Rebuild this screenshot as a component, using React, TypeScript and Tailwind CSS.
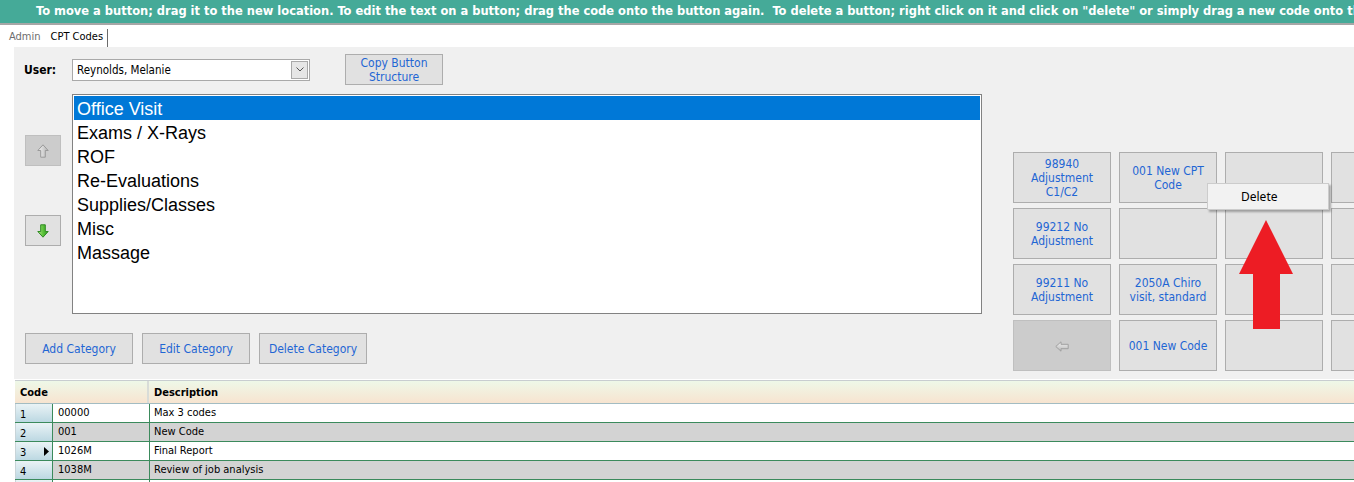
import React from 'react';

const tahoma = "font-['DejaVu_Sans_Condensed','DejaVu_Sans',sans-serif]";

const gridRows: string[][] = [
  ['98940\nAdjustment\nC1/C2', '001 New CPT\nCode', '', ''],
  ['99212 No\nAdjustment', '', '', ''],
  ['99211 No\nAdjustment', '2050A Chiro\nvisit, standard', '', ''],
  ['<', '001 New Code', '', ''],
];

const categories = ['Office Visit', 'Exams / X-Rays', 'ROF', 'Re-Evaluations', 'Supplies/Classes', 'Misc', 'Massage'];

const codes = [
  { n: '1', code: '00000', desc: 'Max 3 codes' },
  { n: '2', code: '001', desc: 'New Code' },
  { n: '3', code: '1026M', desc: 'Final Report', current: true },
  { n: '4', code: '1038M', desc: 'Review of job analysis' },
  { n: '', code: '', desc: '' },
];

function UpArrow() {
  return (
    <svg width="12" height="14" viewBox="0 0 12 14">
      <defs>
        <linearGradient id="upg" x1="0" y1="0" x2="1" y2="0">
          <stop offset="0" stopColor="#f4f4f4" />
          <stop offset="1" stopColor="#b4b4b4" />
        </linearGradient>
      </defs>
      <path d="M6 0.8 L11.2 6.5 L8.3 6.5 L8.3 13.2 L3.7 13.2 L3.7 6.5 L0.8 6.5 Z" fill="url(#upg)" stroke="#9a9a9a" strokeWidth="1" strokeLinejoin="round" />
    </svg>
  );
}

function DownArrow() {
  return (
    <svg width="12" height="14" viewBox="0 0 12 14">
      <defs>
        <linearGradient id="dng" x1="0" y1="0" x2="1" y2="0">
          <stop offset="0" stopColor="#b6ec8e" />
          <stop offset="0.5" stopColor="#5cc23a" />
          <stop offset="1" stopColor="#2f9a22" />
        </linearGradient>
      </defs>
      <path d="M3.7 0.8 L8.3 0.8 L8.3 7.5 L11.2 7.5 L6 13.2 L0.8 7.5 L3.7 7.5 Z" fill="url(#dng)" stroke="#2f8a23" strokeWidth="1" strokeLinejoin="round" />
    </svg>
  );
}

function LeftArrow() {
  return (
    <svg width="14" height="11" viewBox="0 0 14 11">
      <defs>
        <linearGradient id="lfg" x1="0" y1="0" x2="0" y2="1">
          <stop offset="0" stopColor="#f2f2f2" />
          <stop offset="1" stopColor="#b8b8b8" />
        </linearGradient>
      </defs>
      <path d="M0.8 5.5 L6 0.8 L6 3.3 L13.2 3.3 L13.2 7.7 L6 7.7 L6 10.2 Z" fill="url(#lfg)" stroke="#a0a0a0" strokeWidth="1" strokeLinejoin="round" />
    </svg>
  );
}

export default function App() {
  return (
    <div className={`relative w-[1354px] h-[482px] overflow-hidden bg-white ${tahoma} font-stretch-condensed`}>
      {/* instruction banner */}
      <div className="h-[25px] bg-[#45aa98] border-b-2 border-[#a6a6a6] pl-[36px] text-white font-bold text-[12.75px] leading-[21px] whitespace-nowrap overflow-hidden">
        To move a button; drag it to the new location. To edit the text on a button; drag the code onto the button again.&nbsp; To delete a button; right click on it and click on "delete" or simply drag a new code onto the button.
      </div>

      {/* tabs */}
      <div className="h-[22px] flex items-end text-[11px]">
        <div className="pl-[9px] pr-[6px] h-[18px] leading-[16px] text-[#6d6d6d]">Admin</div>
        <div className="h-[18px] px-[4px] leading-[16px] text-black bg-white border-r border-[#6b6b6b]">CPT Codes</div>
      </div>

      {/* panel */}
      <div className="ml-[14px] h-[332px] bg-[#f0f0f0] flex overflow-hidden">
        <div className="w-[999px] shrink-0 pl-[10px]">
          <div className="mt-[7px] h-[31px] flex items-center">
            <div className="w-[48px] font-bold text-[12px] text-black">User:</div>
            <div className="w-[238px] h-[22px] bg-white border border-[#a9a9a9] flex items-center justify-between pl-[4px] pr-[1px]">
              <span className="text-[11.5px] leading-[20px] pt-[1px] text-black">Reynolds, Melanie</span>
              <div className="w-[17px] h-[18px] bg-[#e6e6e6] border border-[#a9a9a9] flex items-center justify-center">
                <svg width="8" height="5" viewBox="0 0 8 5"><path d="M0.5 0.5 L4 4 L7.5 0.5" fill="none" stroke="#555" strokeWidth="1" /></svg>
              </div>
            </div>
            <button className="ml-[35px] w-[98px] h-[31px] bg-[#e1e1e1] border border-[#adadad] text-[12px] leading-[14px] text-[#1f66d4]">
              Copy Button<br />Structure
            </button>
          </div>

          <div className="mt-[9px] flex">
            <div className="ml-[1px] w-[36px] pt-[41px] flex flex-col gap-[49px]">
              <div className="w-[36px] h-[31px] bg-[#cccccc] border border-[#bfbfbf] flex items-center justify-center">
                <UpArrow />
              </div>
              <div className="w-[36px] h-[31px] bg-[#e1e1e1] border border-[#adadad] flex items-center justify-center">
                <DownArrow />
              </div>
            </div>
            <div className="ml-[11px] w-[910px] h-[220px] bg-white border border-[#828282] p-[1px] font-['Liberation_Sans',Arial,sans-serif] text-[18px] leading-[24px] text-black">
              {categories.map((c, i) => (
                <div key={c} className={i === 0 ? 'h-[24px] pl-[3px] pt-[1px] bg-[#0078d7] text-white' : 'h-[24px] pl-[3px] pt-[1px]'}>
                  {c}
                </div>
              ))}
            </div>
          </div>

          <div className="mt-[19px] ml-[1px] flex gap-[9px]">
            {['Add Category', 'Edit Category', 'Delete Category'].map((b) => (
              <button key={b} className="w-[108px] h-[31px] bg-[#e1e1e1] border border-[#adadad] text-[12px] text-[#1f66d4]">
                {b}
              </button>
            ))}
          </div>
        </div>

        <div className="pt-[105px]">
          <div className="grid grid-cols-[98px_98px_98px_98px] gap-x-[8px] gap-y-[5px]">
            {gridRows.flat().map((t, i) =>
              t === '<' ? (
                <div key={i} className="h-[51px] bg-[#cccccc] border border-[#bfbfbf] flex items-center justify-center pt-[2px]">
                  <LeftArrow />
                </div>
              ) : (
                <div key={i} className="h-[51px] bg-[#e1e1e1] border border-[#adadad] flex items-center justify-center text-center whitespace-pre-line text-[12px] leading-[14px] text-[#1f66d4]">
                  {t}
                </div>
              )
            )}
          </div>
        </div>
      </div>

      {/* codes table */}
      <div className="mt-[1px] ml-[15px] text-[11px] text-black">
        <div className="h-[24px] flex border-t border-b border-t-[#c8cdd0] border-b-[#a3bcc2] bg-gradient-to-b from-[#eef8e8] to-[#f7e4d0] font-bold">
          <div className="w-[134px] pl-[5px] leading-[23px] border-r-2 border-[#d8dcd8]">Code</div>
          <div className="pl-[5px] leading-[23px]">Description</div>
        </div>
        {codes.map((r, i) => (
          <div key={i} className={i % 2 === 1 ? 'h-[19px] flex border-b border-[#3b8a5c] bg-[#d3d3d3]' : 'h-[19px] flex border-b border-[#3b8a5c] bg-white'}>
            <div className="relative w-[38px] border-r border-[#3b8a5c] border-l border-l-[#c8d4d8] bg-gradient-to-b from-[#eaf3f6] to-[#bcd8e2] pl-[4px] pt-[3px] leading-[15px]">
              {r.n}
              {r.current && (
                <svg className="absolute right-[3px] top-[5px]" width="5" height="9" viewBox="0 0 5 9"><path d="M0 0 L5 4.5 L0 9 Z" fill="#000" /></svg>
              )}
            </div>
            <div className="w-[97px] border-r border-[#3b8a5c] pl-[5px] leading-[17px]">{r.code}</div>
            <div className="pl-[4px] leading-[17px]">{r.desc}</div>
          </div>
        ))}
      </div>

      {/* context menu */}
      <div className="absolute left-[1207px] top-[183px] w-[122px] h-[27px] bg-[#f2f2f2] border border-[#cccccc] shadow-[2px_2px_2px_rgba(0,0,0,0.3)] pl-[33px] font-['Noto_Sans',sans-serif] text-[12px] leading-[25px] text-black">
        Delete
      </div>

      {/* red pointer arrow */}
      <svg className="absolute left-[1239px] top-[220px]" width="54" height="109" viewBox="0 0 54 109">
        <path d="M27 0 L54 54 L41 54 L41 109 L14 109 L14 54 L0 54 Z" fill="#ed1c24" />
      </svg>
    </div>
  );
}
